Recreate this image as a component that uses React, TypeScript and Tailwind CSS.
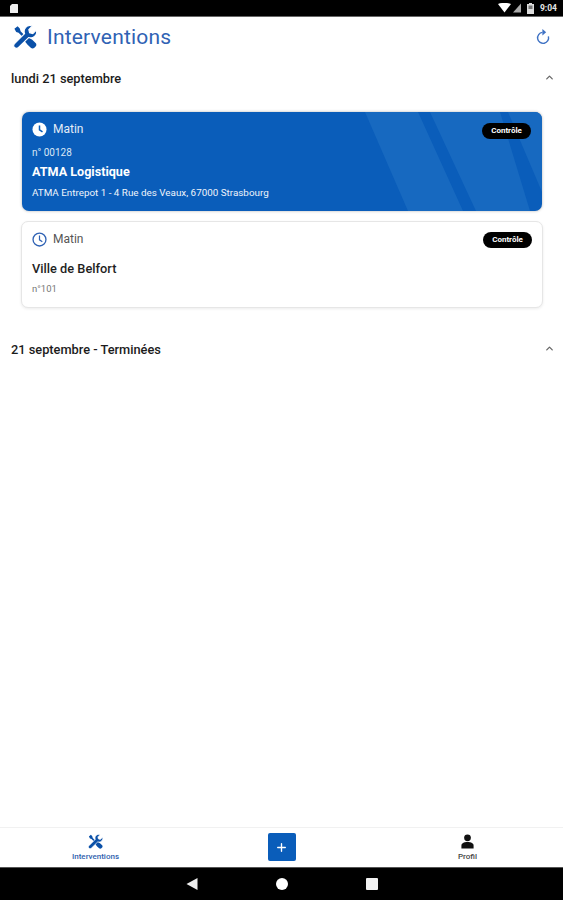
import React from "react";
import { ChevronUp, Plus } from "lucide-react";

function ToolsIcon({ className }: { className: string }) {
  return (
    <svg viewBox="0 0 24 24" className={className} fill="currentColor" aria-hidden="true">
      <path d="M4.6 1.2 1.4 3.8 3.2 7 5.6 7.8 12.8 15 11.8 16.2 14.6 19.8 17.8 22.8C18.9 23.7 20.4 23.6 21.4 22.7L22.6 21.5C23.6 20.4 23.6 19 22.6 18L19.2 14.8 15.6 12.4 14.6 13.4 7.6 6.2 6.8 3.6Z" />
      <path
        stroke="#fff"
        strokeWidth="1.1"
        d="M23.4 5 19.8 8.6 16.6 7.8 15.8 4.6 19.4 1C16.4 0 13.2 1 11.8 3.8 11 5.4 11 7.2 11.6 8.6L1.6 18.6C.4 19.8.4 21.4 1.5 22.5 2.7 23.7 4.4 23.6 5.5 22.5L15.6 12.6C17.1 13.1 18.8 13 20.3 12.2 23 10.8 24.1 7.9 23.4 5Z"
      />
    </svg>
  );
}

function ClockSolid({ className }: { className: string }) {
  return (
    <svg viewBox="0 0 16 16" className={className} aria-hidden="true">
      <circle cx="8" cy="8" r="7.5" fill="currentColor" />
      <path d="M8 3.8V8.4L11.2 10.6" stroke="#0a5dba" strokeWidth="1.6" fill="none" />
    </svg>
  );
}

function ClockOutline({ className }: { className: string }) {
  return (
    <svg viewBox="0 0 16 16" className={className} fill="none" stroke="currentColor" aria-hidden="true">
      <circle cx="8" cy="8" r="6.9" strokeWidth="1.4" />
      <path d="M8 3.8V8.4L11 10.4" strokeWidth="1.3" />
    </svg>
  );
}

function Badge() {
  return (
    <span className="flex h-[16px] w-[49px] items-center justify-center rounded-full bg-black text-[8px] font-bold text-white">
      Contrôle
    </span>
  );
}

function SectionHeader({ label }: { label: string }) {
  return (
    <div className="flex items-center justify-between pl-[11px] pr-[8px]">
      <span className="text-[12.8px] font-medium leading-[16px] text-[#1c1c1c]">{label}</span>
      <ChevronUp className="mb-[3px] h-[11px] w-[11px] text-[#666]" strokeWidth={2.8} />
    </div>
  );
}

export default function App() {
  return (
    <div className="flex h-[900px] w-[563px] flex-col overflow-hidden bg-white font-['Roboto',sans-serif]">
      <div className="flex h-[17px] shrink-0 items-center justify-between border-b border-[#666] bg-black pl-[10px] pr-[6px] text-white">
        <svg viewBox="0 0 8 9" className="h-[9px] w-[8px]" aria-hidden="true">
          <path d="M2 0H7.4C7.8 0 8 .2 8 .6V8.4C8 8.8 7.8 9 7.4 9H.6C.2 9 0 8.8 0 8.4V2Z" fill="#eee" />
        </svg>
        <div className="flex items-center">
          <svg viewBox="0 0 23 10" className="h-[10px] w-[23px]" aria-hidden="true">
            <path d="M0 1C3.5-.5 9.5-.5 13 1L6.5 9.5Z" fill="#fff" />
            <path d="M23 .5V9.5H15Z" fill="#aaa" />
          </svg>
          <svg viewBox="0 0 7 11" className="ml-[6px] h-[11px] w-[7px]" aria-hidden="true">
            <path d="M2 0H5V1H7V11H0V1H2Z" fill="#ddd" />
            <path d="M1.5 2.5H5.5V6H1.5Z" fill="#777" />
          </svg>
          <span className="ml-[6px] text-[8.5px] font-bold leading-none text-[#e6e6e6]">9:04</span>
        </div>
      </div>

      <div className="flex h-[39px] shrink-0 items-center justify-between pl-[13px] pr-[12px]">
        <div className="flex items-center gap-[10px]">
          <ToolsIcon className="h-[24px] w-[24px] text-[#0a50a8]" />
          <span className="text-[21px] leading-[24px] tracking-[0.2px] text-[#2f62b4]">Interventions</span>
        </div>
        <svg viewBox="0 0 16 16" className="h-[16px] w-[16px] text-[#3f72c4]" fill="none" stroke="currentColor" aria-hidden="true">
          <path d="M7.4 3.4A5.5 5.5 0 1 0 13.4 7.4" strokeWidth="1.4" />
          <path d="M7.4 0 11.2 3.3 7.4 6.6Z" fill="currentColor" stroke="none" />
        </svg>
      </div>

      <div className="mt-[15px]">
        <SectionHeader label="lundi 21 septembre" />
      </div>

      <div className="mt-[25px] flex flex-col gap-[10px] pl-[22px] pr-[21px]">
        <div className="relative h-[99px] overflow-hidden rounded-[7px] bg-[#0a5dba] px-[10px] pt-[9px] text-white shadow-[0_0_3px_rgba(0,0,0,0.3)]">
          <svg
            viewBox="0 0 520 99"
            preserveAspectRatio="none"
            className="absolute inset-0 h-full w-full"
            aria-hidden="true"
          >
            <path d="M343 0H396L441 99H386Z" fill="#1769c0" />
            <path d="M408 0H478L508 99H454Z" fill="#1769c0" />
            <path d="M486 0H520V80Z" fill="#1769c0" />
          </svg>
          <div className="relative">
            <div className="flex items-start justify-between">
              <div className="flex items-center gap-[6px]">
                <ClockSolid className="h-[15px] w-[15px] text-white" />
                <span className="text-[12px] leading-[16px] text-[#e3ecf7]">Matin</span>
              </div>
              <div className="mr-px mt-[2px]">
                <Badge />
              </div>
            </div>
            <div className="mt-[8px] text-[10px] leading-[12px] text-[#dbe7f5]">n° 00128</div>
            <div className="mt-[5px] text-[12.6px] font-bold leading-[16px]">ATMA Logistique</div>
            <div className="mt-[6px] text-[9.85px] leading-[13px] text-[#eef4fb]">
              ATMA Entrepot 1 - 4 Rue des Veaux, 67000 Strasbourg
            </div>
          </div>
        </div>

        <div className="-mx-px h-[87px] rounded-[7px] border border-[#e6e6e6] bg-white px-[10px] pt-[9px] shadow-[0_1px_3px_rgba(0,0,0,0.08)]">
          <div className="flex items-start justify-between">
            <div className="flex items-center gap-[6px]">
              <ClockOutline className="h-[15px] w-[15px] text-[#2f62b4]" />
              <span className="text-[12px] leading-[16px] text-[#555]">Matin</span>
            </div>
            <div className="mt-[1px]">
              <Badge />
            </div>
          </div>
          <div className="mt-[13px] text-[12.8px] font-medium leading-[16px] text-[#1f1f1f]">Ville de Belfort</div>
          <div className="mt-[6px] text-[9.5px] leading-[12px] text-[#777]">n°101</div>
        </div>
      </div>

      <div className="mt-[34px]">
        <SectionHeader label="21 septembre - Terminées" />
      </div>

      <div className="flex-1" />

      <div className="grid h-[40px] shrink-0 grid-cols-[191px_1fr_191px] border-t border-[#f1f1f1] bg-white">
        <div className="flex flex-col items-center pt-[6px]">
          <ToolsIcon className="h-[15px] w-[15px] text-[#0a50a8]" />
          <span className="mt-[3px] text-[8px] font-medium leading-[10px] text-[#2f5fae]">Interventions</span>
        </div>
        <div className="flex justify-center pt-[5px]">
          <div className="flex h-[28px] w-[28px] items-center justify-center rounded-[2px] bg-[#0a5dba]">
            <Plus className="h-[13px] w-[13px] text-white" strokeWidth={2.5} />
          </div>
        </div>
        <div className="flex flex-col items-center pt-[6px]">
          <svg viewBox="0 0 16 16" className="h-[15px] w-[15px] text-[#111]" fill="currentColor" aria-hidden="true">
            <circle cx="8" cy="4" r="3.6" />
            <path d="M1.5 15.5V12.5C1.5 10 4 8.6 8 8.6S14.5 10 14.5 12.5V15.5Z" />
          </svg>
          <span className="mt-[3px] text-[8px] font-medium leading-[10px] text-[#444]">Profil</span>
        </div>
      </div>

      <div className="flex h-[33px] shrink-0 items-center justify-center gap-[78px] border-t border-[#555] bg-black">
        <svg viewBox="0 0 12 12" className="h-[12px] w-[12px]" aria-hidden="true">
          <path d="M11.5 0V12L.5 6Z" fill="#eee" />
        </svg>
        <span className="h-[12px] w-[12px] rounded-full bg-white" />
        <span className="h-[12px] w-[12px] rounded-[1px] bg-[#f2f2f2]" />
      </div>
    </div>
  );
}
